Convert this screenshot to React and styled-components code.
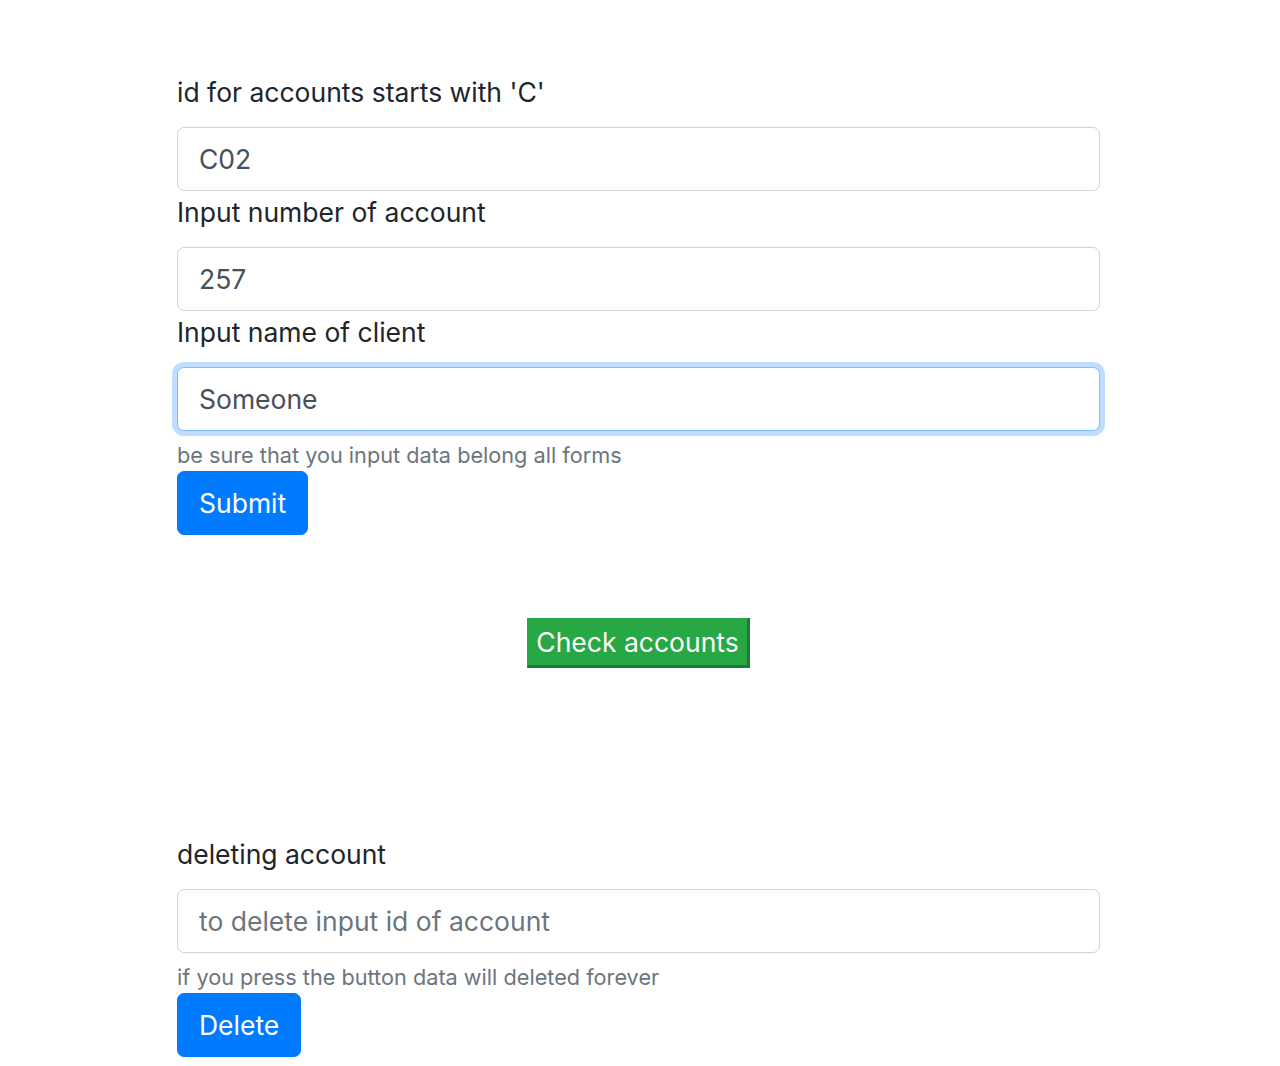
import React from 'react';
import styled, { createGlobalStyle } from 'styled-components';

const GlobalStyle = createGlobalStyle`
  body {
    margin: 0;
    background: #fff;
    font-family: Inter, "Liberation Sans", sans-serif;
    color: #212529;
  }
`;

const Page = styled.div`
  width: 923px;
  margin-left: 177px;
  padding-top: 71px;
  padding-bottom: 8px;
`;

const Form = styled.form`
  display: flex;
  flex-direction: column;
  align-items: flex-start;
`;

const Label = styled.label`
  display: block;
  font-size: 26.5px;
  line-height: 42px;
  margin-bottom: 14px;
  color: #212529;
`;

const Input = styled.input`
  box-sizing: border-box;
  width: 100%;
  height: 64px;
  padding: 0 21px;
  font-family: inherit;
  font-size: 26.5px;
  color: #495057;
  background: #fff;
  border: 1px solid ${(p) => (p.$focused ? '#80bdff' : '#ced4da')};
  border-radius: 7px;
  box-shadow: ${(p) => (p.$focused ? '0 0 0 5px rgba(0, 123, 255, 0.25)' : 'none')};
  outline: none;

  &::placeholder {
    color: #6c757d;
  }
`;

const Hint = styled.small`
  display: block;
  margin-top: 8px;
  font-size: 21.7px;
  line-height: 32px;
  color: #6c757d;
`;

const BlueButton = styled.button`
  height: 64px;
  padding: 0 21px;
  font-family: inherit;
  font-size: 26.5px;
  color: #fff;
  background: #007bff;
  border: 1px solid #007bff;
  border-radius: 7px;
  cursor: pointer;
`;

const CheckRow = styled.div`
  display: flex;
  justify-content: center;
  margin-top: 83px;
  margin-bottom: 165px;
`;

const CheckButton = styled.button`
  box-sizing: border-box;
  height: 50px;
  padding: 0 8px;
  font-family: inherit;
  font-size: 26.5px;
  color: #fff;
  background: #28a745;
  border-style: solid;
  border-width: 1px 3px 3px 1px;
  border-color: #28a745 #1e7a35 #1e7a35 #28a745;
  border-radius: 0;
  cursor: pointer;
`;

export default function App() {
  return (
    <>
      <GlobalStyle />
      <Page>
        <Form onSubmit={(e) => e.preventDefault()}>
          <Label htmlFor="accId">id for accounts starts with 'C'</Label>
          <Input id="accId" defaultValue="C02" />
          <Label htmlFor="accNum">Input number of account</Label>
          <Input id="accNum" defaultValue="257" />
          <Label htmlFor="client">Input name of client</Label>
          <Input id="client" defaultValue="Someone" $focused />
          <Hint>be sure that you input data belong all forms</Hint>
          <BlueButton type="submit">Submit</BlueButton>
        </Form>

        <CheckRow>
          <CheckButton>Check accounts</CheckButton>
        </CheckRow>

        <Form onSubmit={(e) => e.preventDefault()}>
          <Label htmlFor="delId">deleting account</Label>
          <Input id="delId" placeholder="to delete input id of account" />
          <Hint>if you press the button data will deleted forever</Hint>
          <BlueButton type="submit">Delete</BlueButton>
        </Form>
      </Page>
    </>
  );
}
